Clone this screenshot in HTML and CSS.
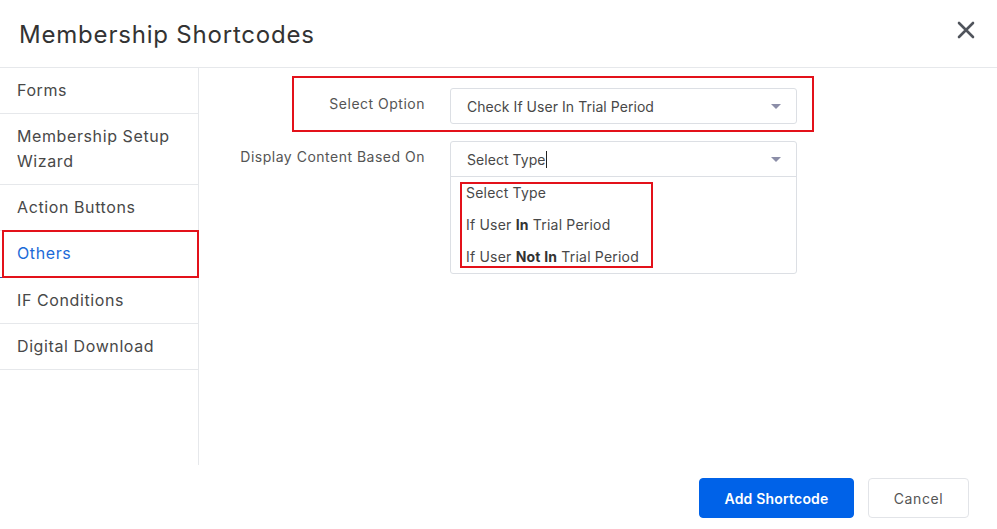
FILE: index.html
```html
<!DOCTYPE html>
<html>
<head>
<meta charset="utf-8">
<link rel="stylesheet" href="styles.css">
</head>
<body>
<div class="modal">
  <div class="header">
    <h1 class="title">Membership Shortcodes</h1>
    <button class="close" aria-label="Close">
      <svg width="18" height="18" viewBox="0 0 18 18"><path d="M2 2 L16 16 M16 2 L2 16" stroke="#50545c" stroke-width="2.6" stroke-linecap="round"/></svg>
    </button>
  </div>
  <div class="content">
    <nav class="sidebar">
      <div class="item">Forms</div>
      <div class="item">Membership Setup Wizard</div>
      <div class="item">Action Buttons</div>
      <div class="item active">Others</div>
      <div class="item">IF Conditions</div>
      <div class="item">Digital Download</div>
    </nav>
    <div class="main">
      <div class="row">
        <label class="label">Select Option</label>
        <div class="select">
          <span>Check If User In Trial Period</span>
          <span class="arrow"></span>
        </div>
      </div>
      <div class="row">
        <label class="label">Display Content Based On</label>
        <div class="combo">
          <div class="combo-input">
            <span>Select Type<span class="cursor"></span></span>
            <span class="arrow"></span>
          </div>
          <div class="options">
            <div class="option">Select Type</div>
            <div class="option">If User <b>In</b> Trial Period</div>
            <div class="option">If User <b>Not In</b> Trial Period</div>
          </div>
        </div>
      </div>
    </div>
  </div>
  <div class="footer">
    <button class="btn primary">Add Shortcode</button>
    <button class="btn secondary">Cancel</button>
  </div>
  <div class="mark mark-row"></div>
  <div class="mark mark-options"></div>
  <div class="mark mark-others"></div>
</div>
</body>
</html>
```
FILE: styles.css
```css
* { box-sizing: border-box; }
html, body { margin: 0; padding: 0; background: #fff; }
body {
  width: 997px;
  height: 529px;
  overflow: hidden;
  font-family: "Inter", "Open Sans", sans-serif;
  color: #444;
}
.modal { position: relative; width: 997px; height: 529px; }
.header {
  height: 68px;
  border-bottom: 1px solid #e6e8eb;
  display: flex;
  align-items: center;
  justify-content: space-between;
  padding: 0 22px 0 19px;
}
.title {
  margin: 0;
  font-size: 24px;
  font-weight: 400;
  color: #333;
  letter-spacing: 0.8px;
  padding-top: 2px;
}
.close {
  border: 0;
  background: none;
  padding: 0;
  width: 18px;
  height: 18px;
  margin-bottom: 7px;
}
.content { display: flex; height: 397px; }
.sidebar {
  width: 199px;
  border-right: 1px solid #e6e8eb;
  flex: none;
}
.item {
  padding: 10px 17px;
  font-size: 16px;
  line-height: 25px;
  letter-spacing: 0.6px;
  color: #484848;
  border-bottom: 1px solid #e6e8eb;
}
.item.active {
  color: #1c6ad8;
  padding-bottom: 11px;
  border-bottom: 1px solid #3050b0;
}
.main {
  flex: 1;
  padding: 20px 0 0 0;
  display: flex;
  flex-direction: column;
  gap: 17px;
}
.row {
  display: grid;
  grid-template-columns: 226px 347px;
  column-gap: 25px;
  align-items: start;
}
.label {
  text-align: right;
  font-size: 14px;
  letter-spacing: 0.5px;
  color: #555;
  padding-top: 7px;
}
.select, .combo-input {
  height: 36px;
  display: flex;
  align-items: center;
  justify-content: space-between;
  padding: 0 15px 0 16px;
  font-size: 14px;
  letter-spacing: 0.05px;
  color: #484848;
}
.select {
  border: 1px solid #dcdfe4;
  border-radius: 3px;
}
.combo {
  border: 1px solid #dcdfe4;
  border-radius: 3px;
}
.combo-input { height: 35px; border-bottom: 1px solid #dcdfe4; }
.cursor {
  display: inline-block;
  width: 1px;
  height: 17px;
  background: #222;
  vertical-align: -3px;
}
.arrow {
  width: 0;
  height: 0;
  border-left: 5px solid transparent;
  border-right: 5px solid transparent;
  border-top: 5px solid #8c8ea8;
  margin-top: 1px;
}
.option {
  height: 32px;
  line-height: 32px;
  padding-left: 15px;
  font-size: 14px;
  letter-spacing: 0.2px;
  color: #484848;
}
.option b { font-weight: 700; color: #333; }
.footer {
  display: flex;
  justify-content: flex-end;
  gap: 14px;
  padding: 13px 28px 0 0;
}
.btn {
  height: 40px;
  border-radius: 4px;
  font-family: inherit;
  font-size: 14px;
  cursor: pointer;
}
.btn.primary {
  width: 155px;
  background: #0062e8;
  border: 1px solid #0062e8;
  color: #fff;
  font-weight: 600;
  letter-spacing: 0.2px;
}
.btn.secondary {
  width: 101px;
  background: #fff;
  border: 1px solid #e2e4e8;
  color: #555;
  letter-spacing: 0.6px;
}
.mark {
  position: absolute;
  border: 2px solid #e3111a;
  pointer-events: none;
}
.mark-row { left: 292px; top: 76px; width: 522px; height: 56px; }
.mark-options { left: 460px; top: 182px; width: 193px; height: 86px; }
.mark-others { left: 2px; top: 230px; width: 197px; height: 48px; }
```
